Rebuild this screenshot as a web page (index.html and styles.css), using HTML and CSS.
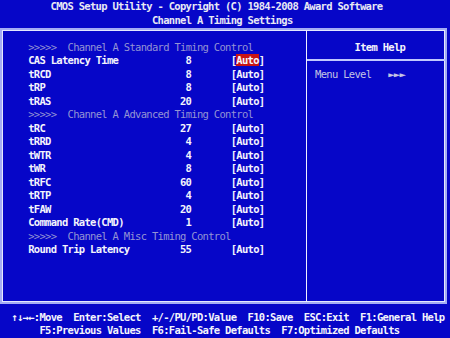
FILE: index.html
```html
<!DOCTYPE html>
<html>
<head>
  <title>CMOS Setup Utility</title>
  <link rel="stylesheet" href="styles.css">
</head>
<body>
  <div class="screen">
    <header class="title">
      <div class="title-main">CMOS Setup Utility - Copyright (C) 1984-2008 Award Software</div>
      <div class="title-sub">Channel A Timing Settings</div>
    </header>

    <main class="frame">
      <section class="items">
        <div class="group">&gt;&gt;&gt;&gt;&gt;  Channel A Standard Timing Control</div>
        <div class="item"><span class="name">CAS Latency Time</span><span class="value">8</span><span class="setting">[<span class="sel">Auto</span>]</span></div>
        <div class="item"><span class="name">tRCD</span><span class="value">8</span><span class="setting">[Auto]</span></div>
        <div class="item"><span class="name">tRP</span><span class="value">8</span><span class="setting">[Auto]</span></div>
        <div class="item"><span class="name">tRAS</span><span class="value">20</span><span class="setting">[Auto]</span></div>
        <div class="group">&gt;&gt;&gt;&gt;&gt;  Channel A Advanced Timing Control</div>
        <div class="item"><span class="name">tRC</span><span class="value">27</span><span class="setting">[Auto]</span></div>
        <div class="item"><span class="name">tRRD</span><span class="value">4</span><span class="setting">[Auto]</span></div>
        <div class="item"><span class="name">tWTR</span><span class="value">4</span><span class="setting">[Auto]</span></div>
        <div class="item"><span class="name">tWR</span><span class="value">8</span><span class="setting">[Auto]</span></div>
        <div class="item"><span class="name">tRFC</span><span class="value">60</span><span class="setting">[Auto]</span></div>
        <div class="item"><span class="name">tRTP</span><span class="value">4</span><span class="setting">[Auto]</span></div>
        <div class="item"><span class="name">tFAW</span><span class="value">20</span><span class="setting">[Auto]</span></div>
        <div class="item"><span class="name">Command Rate(CMD)</span><span class="value">1</span><span class="setting">[Auto]</span></div>
        <div class="group">&gt;&gt;&gt;&gt;&gt;  Channel A Misc Timing Control</div>
        <div class="item"><span class="name">Round Trip Latency</span><span class="value">55</span><span class="setting">[Auto]</span></div>
      </section>

      <aside class="help">
        <div class="help-title">Item Help</div>
        <div class="help-body">Menu Level   ►►►</div>
      </aside>
    </main>

    <footer class="keys">
      <div class="keys-1">↑↓→←:Move  Enter:Select  +/-/PU/PD:Value  F10:Save  ESC:Exit  F1:General Help</div>
      <div class="keys-2">F5:Previous Values  F6:Fail-Safe Defaults  F7:Optimized Defaults</div>
    </footer>
  </div>
</body>
</html>
```

FILE: styles.css
```css
body {
  margin: 0;
  background-color: #0606c8; /* BIOS blue */
}

.screen {
  width: 450px;
  height: 338px;
  overflow: hidden;
  background-color: #0606c8;
  color: #f4f4fc;
  font-family: "DejaVu Sans Mono", "Liberation Mono", monospace;
  font-weight: bold;
  font-size: 10.5px;
  letter-spacing: -0.696px; /* 5.625px per text cell */
  line-height: 13.52px;
}

.title-main,
.title-sub,
.group,
.item,
.help-title,
.help-body,
.keys-1,
.keys-2 {
  height: 13.52px;
  white-space: pre;
}

/* header */

.title {
  color: #e8e8f4;
}

.title-main {
  padding-left: 50.6px;
}

.title-sub {
  padding-left: 151.9px;
}

/* main box */

.frame {
  display: flex;
  width: 447px;
  height: 276px;
  margin-top: 1px;
  box-sizing: border-box;
  border: 2px solid #a4acf4;
  box-shadow: inset 0 0 0 1px #e4e8ff;
}

.items {
  width: 304px;
  padding: 10.56px 0 0 26.125px;
  box-sizing: border-box;
}

.group {
  color: #9494d4;
  font-weight: normal;
}

.item {
  display: flex;
}

.name {
  width: 140.625px;
}

.value {
  width: 22.5px;
  text-align: right;
}

.setting {
  margin-left: 39.375px;
}

.sel {
  background-color: #c81414;
}

.help {
  flex: 1;
  border-left: 1px solid #f0f0ff;
}

.help-title {
  padding: 10.56px 0 4.6px 47.5px;
  border-bottom: 2px solid #c0c8ff;
}

.help-body {
  padding: 6.9px 0 0 8px;
  color: #c4c4e4;
  font-weight: normal;
}

/* key legend */

.keys {
  margin-top: 6.92px;
}

.keys-1 {
  padding-left: 11.25px;
}

.keys-2 {
  padding-left: 39.375px;
}
```
